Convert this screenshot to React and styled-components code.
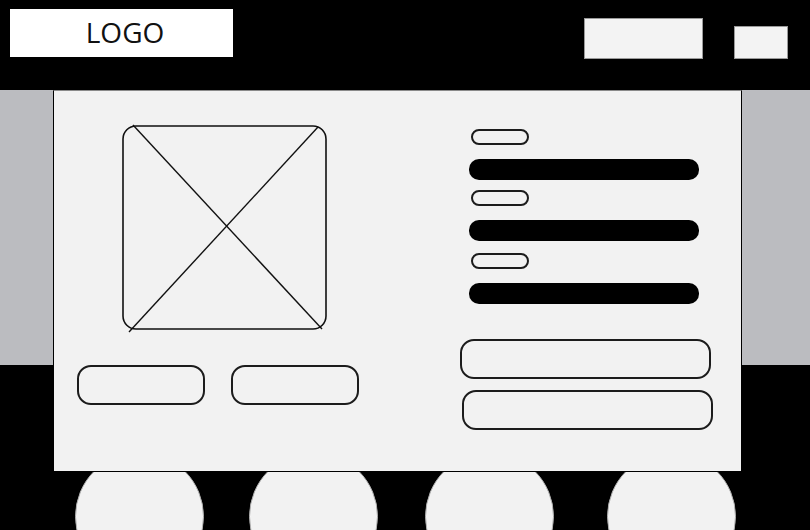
import styled, { createGlobalStyle } from "styled-components";

const Global = createGlobalStyle`
  html, body {
    margin: 0;
    padding: 0;
    background: #000;
  }
  * {
    box-sizing: border-box;
  }
`;

const Page = styled.div`
  width: 810px;
  height: 530px;
  overflow: hidden;
  background: #000;
  font-family: "Open Sans", "Liberation Sans", sans-serif;
`;

const Header = styled.header`
  height: 90px;
  display: flex;
  justify-content: space-between;
  align-items: flex-start;
  padding: 9px 22px 0 10px;
`;

const Logo = styled.div`
  width: 223px;
  height: 48px;
  background: #fff;
  display: flex;
  align-items: center;
  justify-content: center;
  font-size: 28px;
  color: #111;
  padding: 0 0 3px 7px;
`;

const NavGroup = styled.div`
  display: flex;
  align-items: flex-end;
  gap: 31px;
  margin-top: 9px;
`;

const NavBox = styled.div`
  width: ${(p) => p.$w}px;
  height: ${(p) => p.$h}px;
  background: #f3f3f3;
  border: 1px solid #9a9a9a;
`;

const Stage = styled.section`
  background: linear-gradient(#bbbcc0 0 275px, #000 275px);
  height: 440px;
`;

const Card = styled.div`
  position: relative;
  z-index: 1;
  margin-left: 53px;
  width: 689px;
  height: 382px;
  background: #f2f2f2;
  border: 1px solid #000;
  border-top-color: #8a8a8a;
  display: flex;
`;

const LeftCol = styled.div`
  width: 406px;
  display: flex;
  flex-direction: column;
  padding-top: 34px;
`;

const Placeholder = styled.svg`
  margin-left: 68px;
  overflow: visible;
  display: block;
`;

const ButtonRow = styled.div`
  display: flex;
  gap: 26px;
  margin: 35px 0 0 23px;
`;

const OutlineButton = styled.div`
  width: ${(p) => p.$w}px;
  height: 40px;
  border: 2px solid #1c1c1c;
  border-radius: 14px;
  background: #f2f2f2;
  margin-left: ${(p) => p.$ml || 0}px;
`;

const RightCol = styled.div`
  display: flex;
  flex-direction: column;
  padding-top: 38px;
`;

const Tag = styled.div`
  width: 58px;
  height: 16px;
  border: 2px solid #1c1c1c;
  border-radius: 8px;
  margin: ${(p) => p.$mt || 0}px 0 0 11px;
`;

const Bar = styled.div`
  width: 230px;
  height: 21px;
  border-radius: 10px;
  background: #000;
  margin: 14px 0 0 9px;
`;

const ButtonStack = styled.div`
  display: flex;
  flex-direction: column;
  gap: 11px;
  margin-top: 35px;
`;

const CircleRow = styled.div`
  display: flex;
  margin-top: -20px;
`;

const Circle = styled.div`
  width: 129px;
  height: 129px;
  border-radius: 50%;
  background: #f2f2f2;
  border: 1px solid #b0b0b0;
  flex-shrink: 0;
  margin-left: ${(p) => p.$ml}px;
`;

const ImagePlaceholder = () => (
  <Placeholder width="205" height="205" viewBox="0 0 205 205">
    <rect x="1" y="1" width="203" height="203" rx="13" fill="none" stroke="#111" strokeWidth="1.6" />
    <line x1="11" y1="0" x2="200" y2="204" stroke="#111" strokeWidth="1.4" />
    <line x1="7" y1="207" x2="196" y2="2" stroke="#111" strokeWidth="1.4" />
  </Placeholder>
);

export default function App() {
  return (
    <Page>
      <Global />
      <Header>
        <Logo>LOGO</Logo>
        <NavGroup>
          <NavBox $w={119} $h={41} />
          <NavBox $w={54} $h={33} />
        </NavGroup>
      </Header>
      <Stage>
        <Card>
          <LeftCol>
            <ImagePlaceholder />
            <ButtonRow>
              <OutlineButton $w={128} />
              <OutlineButton $w={128} />
            </ButtonRow>
          </LeftCol>
          <RightCol>
            <Tag />
            <Bar />
            <Tag $mt={10} />
            <Bar />
            <Tag $mt={12} />
            <Bar />
            <ButtonStack>
              <OutlineButton $w={251} />
              <OutlineButton $w={251} $ml={2} />
            </ButtonStack>
          </RightCol>
        </Card>
        <CircleRow>
          <Circle $ml={75} />
          <Circle $ml={45} />
          <Circle $ml={47} />
          <Circle $ml={53} />
        </CircleRow>
      </Stage>
    </Page>
  );
}
